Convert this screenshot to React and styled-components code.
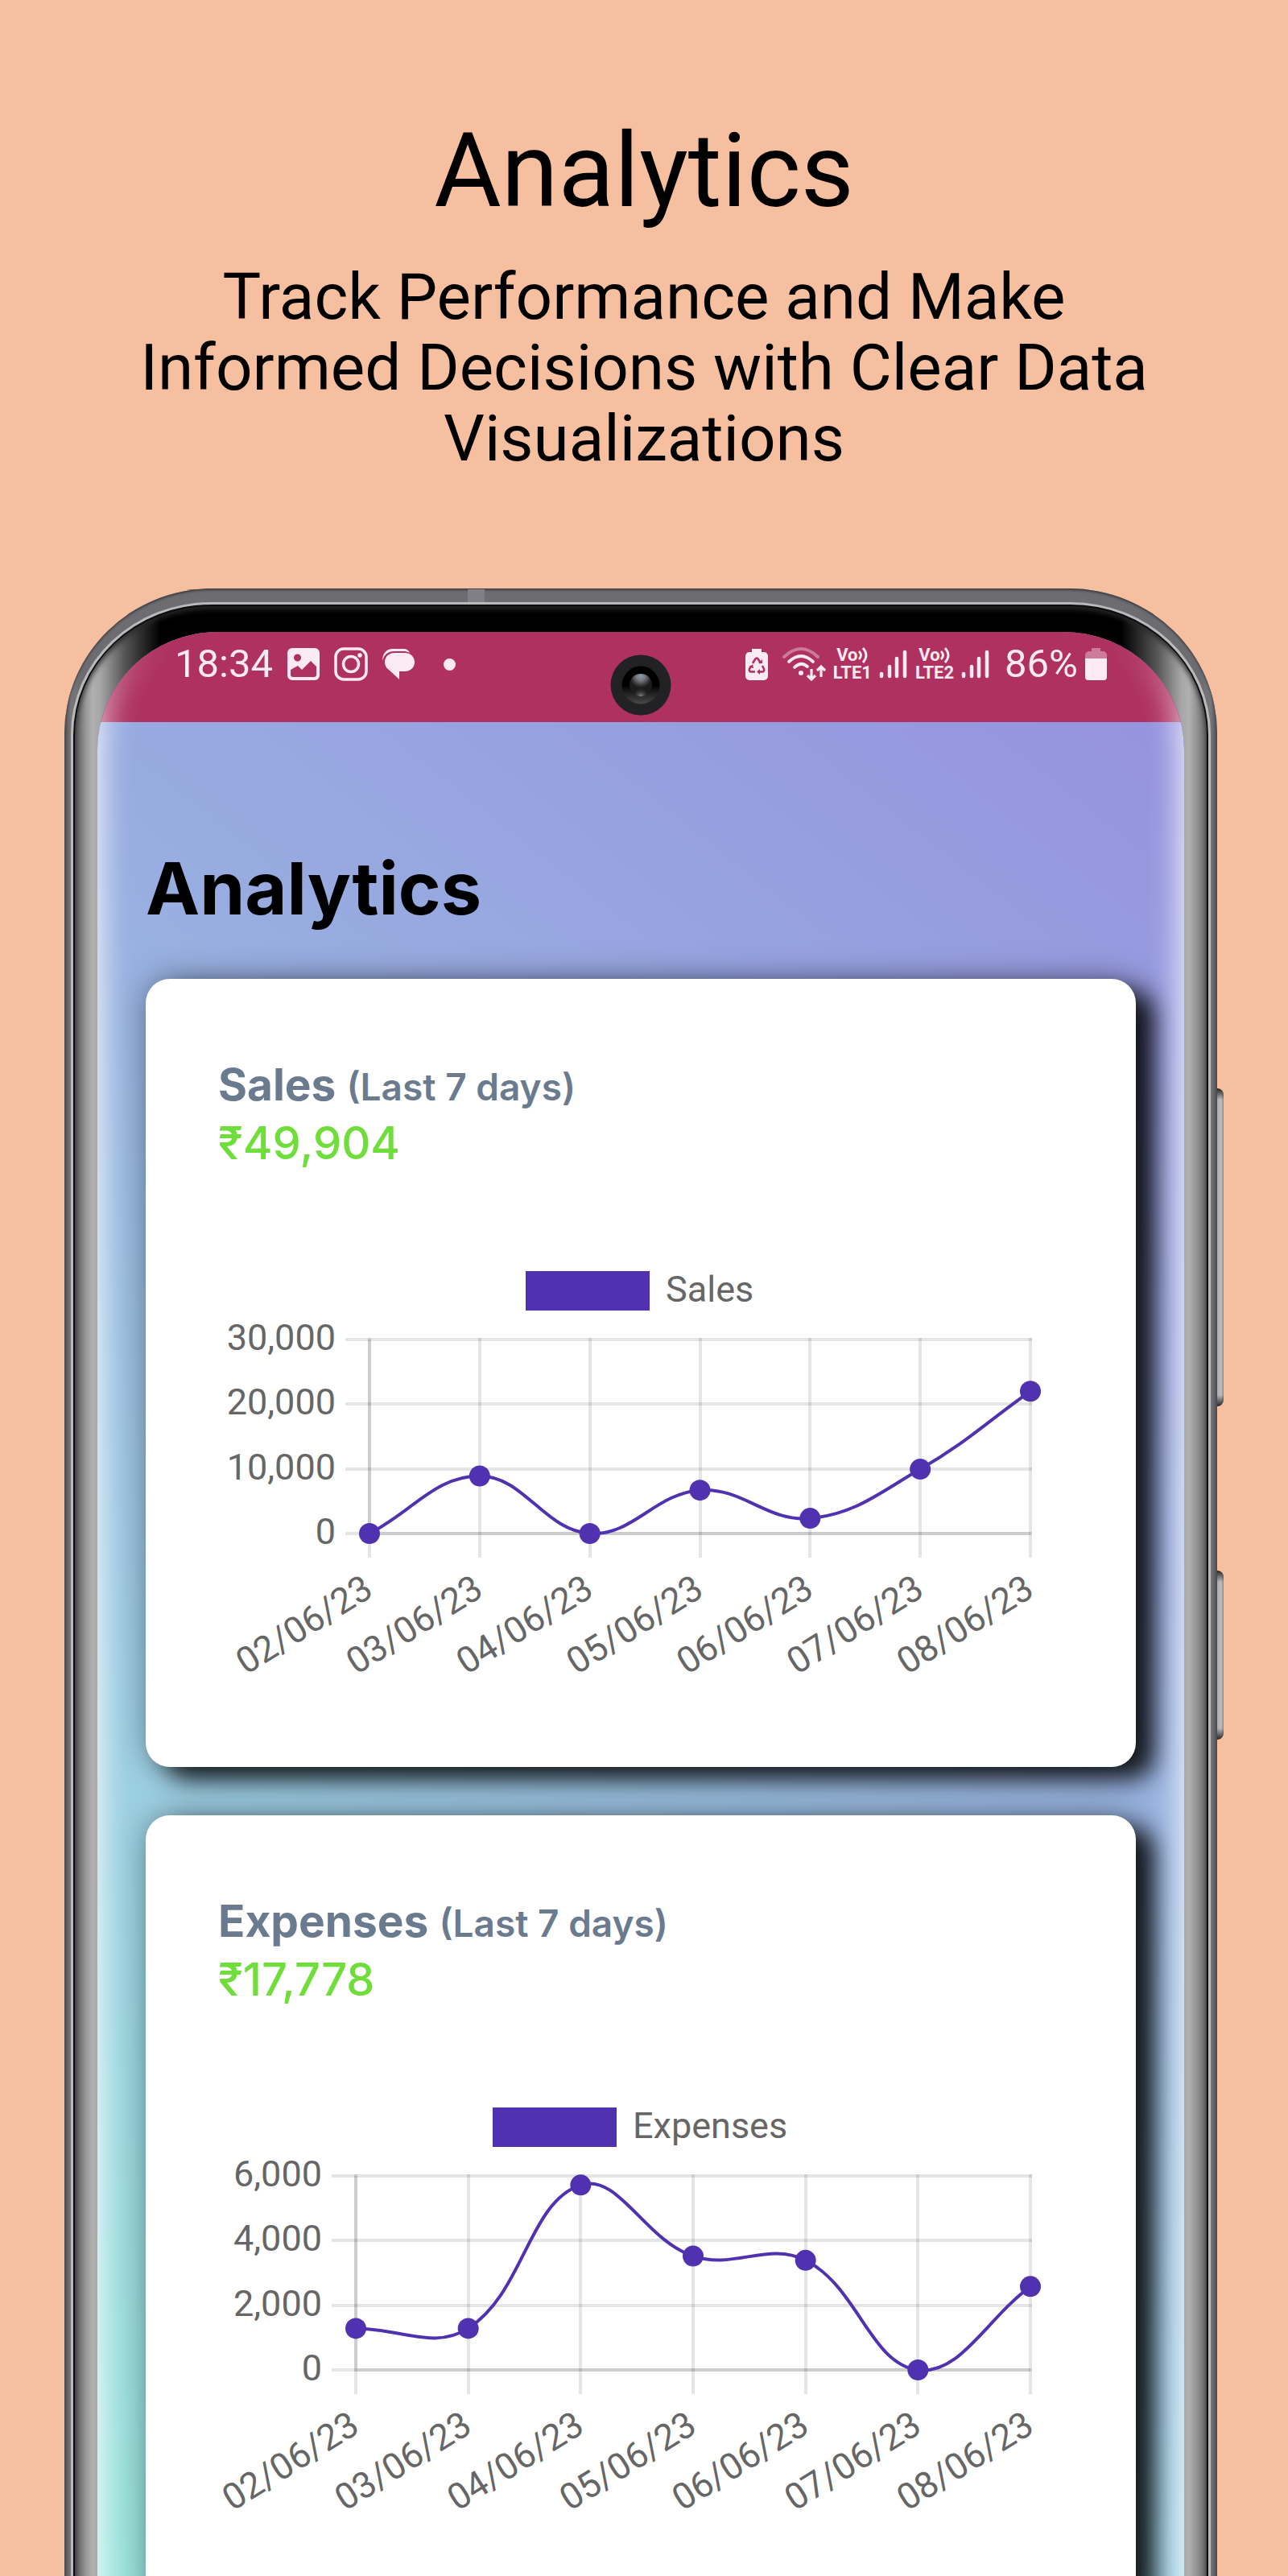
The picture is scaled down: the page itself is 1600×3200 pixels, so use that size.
import React from "react";
import styled, { createGlobalStyle } from "styled-components";

const GlobalStyle = createGlobalStyle`
  *, *::before, *::after { box-sizing: border-box; }
  body { margin: 0; background: #f6bf9f; }
`;

const ui = '"Roboto", "Liberation Sans", sans-serif';
const display = '"Inter", "Liberation Sans", sans-serif';

const Page = styled.main`
  height: 100vh;
  overflow: hidden;
  display: flex;
  flex-direction: column;
  gap: 142px;
  padding: 137px 80px 0;
  background: #f6bf9f;
  font-family: ${ui};
  color: #000;
`;

const Intro = styled.header`
  display: flex;
  flex-direction: column;
  align-items: center;
  gap: 38px;
  text-align: center;
`;

const Title = styled.h1`
  margin: 0;
  font-size: 128px;
  line-height: 150px;
  font-weight: 400;
`;

const Subtitle = styled.p`
  margin: 0;
  max-width: 1320px;
  font-size: 80px;
  line-height: 88px;
`;

/* ---------- phone ---------- */

const Phone = styled.section`
  flex: 1 0 auto;
  display: grid;
  grid-template-columns: minmax(0, 1fr) 8px;
`;

const Shell = styled.div`
  position: relative;
  display: flex;
  padding: 17px 8px 0;
  border-radius: 184px 184px 0 0 / 180px 180px 0 0;
  background: linear-gradient(90deg, #4f4f52, #77777c 8px, #6d6c71 20px, #6d6c71 calc(100% - 20px), #77777c calc(100% - 8px), #4f4f52);
  box-shadow: inset 0 2px 3px #3e3e40;
`;

const Antenna = styled.div`
  position: absolute;
  top: 1px;
  left: 35%;
  width: 21px;
  height: 16px;
  background: #807f85;
`;

const Rim = styled.div`
  flex: 1;
  min-width: 0;
  display: flex;
  padding: 3px 3px 0;
  border-radius: 174px 174px 0 0 / 164px 164px 0 0;
  background: #b9b9bb;
`;

const Seam = styled.div`
  flex: 1;
  min-width: 0;
  display: flex;
  padding: 2px 2px 0;
  border-radius: 171px 171px 0 0 / 162px 162px 0 0;
  background: #0c0c0c;
`;

const Bezel = styled.div`
  flex: 1;
  min-width: 0;
  display: flex;
  padding: 32px 28px 0;
  border-radius: 169px 169px 0 0 / 160px 160px 0 0;
  background: linear-gradient(
    90deg,
    #555 0, #999 14px, #b0b0b0 22px, #a6a6a6 32px, #555 62px, #000 106px,
    #000 calc(100% - 106px), #555 calc(100% - 62px), #a6a6a6 calc(100% - 32px),
    #b0b0b0 calc(100% - 22px), #999 calc(100% - 14px), #666 100%
  );
  box-shadow: inset 0 4px 6px rgba(40, 40, 40, 0.9);
`;

const Screen = styled.div`
  position: relative;
  flex: 1;
  min-width: 0;
  overflow: hidden;
  border-radius: 150px 150px 0 0 / 146px 146px 0 0;
  background: linear-gradient(38deg, #9be5dc 3%, #9dcfe3 32%, #98ade0 64%, #97a3e0 77%, #9590dd 100%);

  &::after {
    content: "";
    position: absolute;
    inset: 0;
    border-radius: inherit;
    pointer-events: none;
    box-shadow:
      inset 36px 0 36px -30px rgba(255, 255, 255, 0.85),
      inset -36px 0 36px -30px rgba(255, 255, 255, 0.85);
    mask-image: linear-gradient(180deg, transparent 10px, #000 130px);
  }
`;

const ButtonRail = styled.div`
  display: flex;
  flex-direction: column;
  gap: 204px;
  padding-top: 621px;
`;

const SideButton = styled.div`
  flex: none;
  height: ${(p) => p.$length}px;
  border-radius: 0 8px 8px 0;
  background:
    linear-gradient(180deg, #222, transparent 14px, transparent calc(100% - 14px), #222),
    linear-gradient(90deg, #a9abad, #bcbec0 5px, #8a888c);
`;

/* ---------- status bar ---------- */

const StatusBar = styled.div`
  position: relative;
  height: 112px;
  display: flex;
  justify-content: space-between;
  padding: 20px 96px 0;
  background: #ae3160;
  color: #fceaf2;
`;

const StatusGroup = styled.div`
  display: flex;
  align-items: center;
  height: 40px;
  gap: ${(p) => p.$gap}px;
  font-size: 49px;
  line-height: 40px;

  svg { display: block; flex: none; }
`;

const Percent = styled.span`
  margin-left: 9px;
`;

const Dot = styled.span`
  width: 15px;
  height: 15px;
  margin-left: 18px;
  border-radius: 50%;
  background: currentColor;
`;

const Network = styled.span`
  display: grid;
  justify-items: center;
  font-size: 22px;
  line-height: 22px;
  font-weight: 700;
`;

const VoLine = styled.span`
  display: flex;
  align-items: center;
`;

const Camera = styled.svg`
  position: absolute;
  top: 28px;
  left: 50%;
  margin-left: -38px;
`;

/* ---------- app ---------- */

const AppBody = styled.div`
  padding: 152px 60px 60px;
`;

const AppTitle = styled.h2`
  margin: 0 0 57px;
  font-family: ${display};
  font-size: 90px;
  line-height: 110px;
  font-weight: 700;
`;

const Cards = styled.div`
  display: grid;
  gap: 60px;
`;

const Card = styled.article`
  padding: 96px 90px 91px;
  border-radius: 30px;
  background: #fff;
  box-shadow:
    24px 15px 30px rgba(0, 0, 0, 0.85),
    0 0 40px rgba(0, 0, 0, 0.35);
`;

const CardTitle = styled.h3`
  margin: 0;
  font-family: ${display};
  font-size: 55px;
  line-height: 70px;
  font-weight: 700;
  color: #6b7b8f;
`;

const Period = styled.span`
  font-size: 46px;
  font-weight: 600;
`;

const Amount = styled.p`
  margin: 0 0 104px;
  font-family: ${display};
  font-size: 56px;
  line-height: 70px;
  font-weight: 500;
  color: #6fdd3a;
`;

const ChartSvg = styled.svg`
  display: block;
  width: 100%;
  height: auto;
  overflow: visible;
  font-family: ${ui};
  font-size: 45px;
  fill: #666;
`;

const INK = "#5032b0";

function ImageIcon() {
  return (
    <svg width="40" height="40" viewBox="0 0 40 40">
      <path fill="currentColor" fillRule="evenodd" d="M6 0h28a6 6 0 0 1 6 6v28a6 6 0 0 1-6 6H6a6 6 0 0 1-6-6V6a6 6 0 0 1 6-6ZM4 27v6q0 3 3 3h26q3 0 3-3V23l-7-7-11 11-5-5ZM12.500 7.500a4.500 4.500 0 1 0 .01 0Z" />
    </svg>
  );
}

function InstagramIcon() {
  return (
    <svg width="42" height="42" viewBox="0 0 42 42" fill="none" stroke="currentColor" strokeWidth="3.500">
      <rect x="2" y="2" width="38" height="38" rx="10" />
      <circle cx="21" cy="21" r="9.500" />
      <circle cx="32" cy="10" r="2.700" fill="currentColor" stroke="none" />
    </svg>
  );
}

function ChatIcon() {
  return (
    <svg width="40" height="40" viewBox="0 0 40 40" fill="currentColor">
      <path d="M0 16C0 7 5 1 13 1h13c4 0 7 2 8 5-2-1-4-2-7-2H15C7 4 2 8 0 16Z" />
      <path d="M15 6h13c7 0 12 5 12 11.500S35 29 28 29h-7v10L8 27c-3-2-5-5-5-9.500C3 11 8 6 15 6Z" />
    </svg>
  );
}

function RecycleBatteryIcon() {
  return (
    <svg width="28" height="40" viewBox="0 0 28 40">
      <path fill="currentColor" d="M8 1h12v4h3a5 5 0 0 1 5 5v25a5 5 0 0 1-5 5H5a5 5 0 0 1-5-5V10a5 5 0 0 1 5-5h3Z" />
      <g fill="none" stroke="#ae3160" strokeWidth="2.600">
        <path d="M9 19l3-5q2-3 4 0l3 5" />
        <path d="M7 22l-2 4q-1 3 2 3.500h5" />
        <path d="M21 22l2 4q1 3-2 3.500h-5" />
      </g>
      <path fill="#ae3160" d="M16 19h5v-5zM18 26v7l-4-3.500zM5 24l4-4 1 5z" />
    </svg>
  );
}

function WifiIcon() {
  return (
    <svg width="54" height="42" viewBox="0 0 54 42" fill="none" stroke="currentColor" strokeWidth="3.800" strokeLinecap="round">
      <path opacity=".4" d="M2 12Q23-8 44 12" />
      <path d="M8 18Q23 4 38 18" />
      <path d="M15 25Q23 17 31 24" />
      <circle cx="23" cy="32" r="3" fill="currentColor" stroke="none" />
      <path d="M36 27v12M31 35l5 5 5-5M48 37V25M43 29l5-5 5 5" strokeWidth="3.200" strokeLinecap="butt" />
    </svg>
  );
}

function SignalIcon() {
  return (
    <svg width="36" height="38" viewBox="0 0 36 38" stroke="currentColor" strokeWidth="4.500" strokeLinecap="round">
      <path d="M3 31v3M13 22v12M22 12v22M32 4v30" />
    </svg>
  );
}

function BatteryIcon() {
  return (
    <svg width="27" height="40" viewBox="0 0 27 40" fill="currentColor">
      <path opacity=".4" d="M8 0h11v4h3a5 5 0 0 1 5 5v4H0V9a5 5 0 0 1 5-5h3Z" />
      <path d="M0 13h27v23a4 4 0 0 1-4 4H4a4 4 0 0 1-4-4Z" />
    </svg>
  );
}

function VoLte({ line }) {
  return (
    <Network>
      <VoLine>
        Vo
        <svg width="13" height="20" viewBox="0 0 13 20" fill="none" stroke="currentColor" strokeWidth="2.800">
          <path d="M1 5q5 5 0 10M6 1q8 9 0 18" />
        </svg>
      </VoLine>
      <span>LTE{line}</span>
    </Network>
  );
}

function CameraLens() {
  return (
    <Camera width="76" height="76" viewBox="0 0 76 76" aria-hidden="true">
      <defs>
        <linearGradient id="ring" x1="0" y1="0" x2="0" y2="1">
          <stop offset=".5" stopColor="#000" />
          <stop offset="1" stopColor="#4a4a4a" />
        </linearGradient>
        <radialGradient id="glint" cx=".5" cy=".1" r=".5">
          <stop offset="0" stopColor="#8a9ab4" />
          <stop offset=".4" stopColor="#77797e" />
          <stop offset="1" stopColor="#1c1c1c" />
        </radialGradient>
        <radialGradient id="flare" cx=".5" cy="1" r=".4">
          <stop offset="0" stopColor="#888" />
          <stop offset="1" stopColor="#1c1c1c" stopOpacity="0" />
        </radialGradient>
      </defs>
      <circle cx="38" cy="38" r="37.500" fill="#222224" />
      <circle cx="38" cy="38" r="23.500" fill="url(#ring)" />
      <circle cx="38" cy="38" r="14" fill="url(#glint)" />
      <circle cx="38" cy="38" r="14" fill="url(#flare)" />
    </Camera>
  );
}

/* Cubic segments through the points, with control handles of the given tension. */
function smoothPath(points, tension) {
  const handles = points.map((cur, i) => {
    const prev = points[i - 1] || cur;
    const next = points[i + 1] || cur;
    const before = Math.hypot(cur.x - prev.x, cur.y - prev.y);
    const after = Math.hypot(next.x - cur.x, next.y - cur.y);
    const a = (tension * before) / (before + after);
    const b = (tension * after) / (before + after);
    const dx = next.x - prev.x;
    const dy = next.y - prev.y;
    return {
      inX: cur.x - a * dx,
      inY: cur.y - a * dy,
      outX: cur.x + b * dx,
      outY: cur.y + b * dy,
    };
  });
  return points
    .map((p, i) => {
      if (i === 0) return `M${p.x} ${p.y}`;
      const from = handles[i - 1];
      const to = handles[i];
      return `C${from.outX} ${from.outY} ${to.inX} ${to.inY} ${p.x} ${p.y}`;
    })
    .join("");
}

const DAYS = ["02/06/23", "03/06/23", "04/06/23", "05/06/23", "06/06/23", "07/06/23", "08/06/23"];

function LineChart({ label, values, ticks, left, legendX }) {
  const top = 105;
  const bottom = 346;
  const right = 1009;
  const max = ticks[0];
  const xAt = (i) => left + ((right - left) * i) / (values.length - 1);
  const yAt = (v) => bottom - ((bottom - top) * v) / max;
  const points = values.map((v, i) => ({ x: xAt(i), y: yAt(v) }));

  return (
    <ChartSvg viewBox="0 0 1050 545" role="img" aria-label={`${label} chart`}>
      <rect x={legendX} y="20" width="154" height="49" fill={INK} />
      <text x={legendX + 174} y="58">{label}</text>
      <g fill="none" stroke="rgba(0,0,0,0.1)" strokeWidth="4">
        {ticks.map((t) => (
          <path key={t} d={`M${left - 30} ${Math.round(yAt(t))}H${right + 2}`} />
        ))}
        {DAYS.map((d, i) => (
          <path key={d} d={`M${Math.round(xAt(i))} ${top - 2}V${bottom + 30}`} />
        ))}
        <path d={`M${left} ${top}V${bottom}H${right}`} />
      </g>
      {ticks.map((t) => (
        <text key={t} x={left - 42} y={yAt(t) + 13} textAnchor="end">
          {t.toLocaleString("en-US")}
        </text>
      ))}
      {DAYS.map((d, i) => (
        <text key={d} textAnchor="end" transform={`translate(${xAt(i) + 7} 422) rotate(-32)`}>
          {d}
        </text>
      ))}
      <path d={smoothPath(points, 0.4)} fill="none" stroke={INK} strokeWidth="4" />
      {points.map((p) => (
        <circle key={p.x} cx={p.x} cy={p.y} r="13" fill={INK} />
      ))}
    </ChartSvg>
  );
}

const REPORTS = [
  {
    label: "Sales",
    total: "₹49,904",
    values: [0, 8900, 0, 6700, 2350, 9950, 22004],
    ticks: [30000, 20000, 10000, 0],
    left: 188,
    legendX: 382,
  },
  {
    label: "Expenses",
    total: "₹17,778",
    values: [1285, 1285, 5718, 3520, 3390, 0, 2580],
    ticks: [6000, 4000, 2000, 0],
    left: 171,
    legendX: 341,
  },
];

export default function App() {
  return (
    <Page>
      <GlobalStyle />
      <Intro>
        <Title>Analytics</Title>
        <Subtitle>Track Performance and Make Informed Decisions with Clear Data Visualizations</Subtitle>
      </Intro>
      <Phone>
        <Shell>
          <Antenna />
          <Rim>
            <Seam>
              <Bezel>
                <Screen>
                  <StatusBar>
                    <StatusGroup $gap={18}>
                      <span>18:34</span>
                      <ImageIcon />
                      <InstagramIcon />
                      <ChatIcon />
                      <Dot />
                    </StatusGroup>
                    <StatusGroup $gap={9}>
                      <RecycleBatteryIcon />
                      <span />
                      <WifiIcon />
                      <VoLte line="1" />
                      <SignalIcon />
                      <VoLte line="2" />
                      <SignalIcon />
                      <Percent>86%</Percent>
                      <BatteryIcon />
                    </StatusGroup>
                    <CameraLens />
                  </StatusBar>
                  <AppBody>
                    <AppTitle>Analytics</AppTitle>
                    <Cards>
                      {REPORTS.map(({ total, ...chart }) => (
                        <Card key={chart.label}>
                          <CardTitle>
                            {chart.label} <Period>(Last 7 days)</Period>
                          </CardTitle>
                          <Amount>{total}</Amount>
                          <LineChart {...chart} />
                        </Card>
                      ))}
                    </Cards>
                  </AppBody>
                </Screen>
              </Bezel>
            </Seam>
          </Rim>
        </Shell>
        <ButtonRail>
          <SideButton $length={395} />
          <SideButton $length={210} />
        </ButtonRail>
      </Phone>
    </Page>
  );
}
